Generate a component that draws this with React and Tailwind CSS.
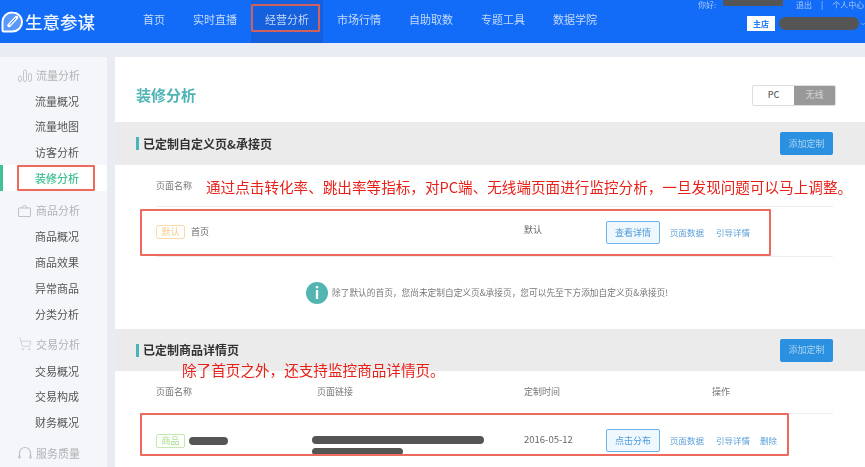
import React from "react";
import { ShoppingCart, ChevronDown } from "lucide-react";

const BarsIcon = () => (
  <svg width="14" height="13" viewBox="0 0 14 13" fill="none" stroke="#c4c6c9" strokeWidth="1">
    <rect x="0.5" y="7" width="3" height="5.5" rx="1.5" />
    <rect x="5.5" y="1" width="3" height="11.5" rx="1.5" />
    <rect x="10.5" y="4.5" width="3" height="8" rx="1.5" />
  </svg>
);

const BagIcon = () => (
  <svg width="13" height="13" viewBox="0 0 13 13" fill="none" stroke="#bfc1c4" strokeWidth="1">
    <rect x="0.500" y="4" width="12" height="8.500" rx="0.500" />
    <path d="M4 4 C4 0.800 9 0.800 9 4" />
  </svg>
);

const HeadsetIcon = () => (
  <svg width="14" height="14" viewBox="0 0 14 14" fill="none" stroke="#bfc1c4" strokeWidth="1.200">
    <path d="M1.500 12 V7 a5.500 5.500 0 0 1 11 0 V12" />
    <path d="M1.500 9.500 V12.500 M12.500 9.500 V12.500" strokeWidth="2" />
  </svg>
);

const groups = [
  { title: "流量分析", icon: <BarsIcon />, items: ["流量概况", "流量地图", "访客分析", "装修分析"], head: "h-[26px]", gap: "" },
  { title: "商品分析", icon: <BagIcon />, items: ["商品概况", "商品效果", "异常商品", "分类分析"], head: "h-[27px]", gap: "mt-[5.500px]" },
  { title: "交易分析", icon: <ShoppingCart size={14} strokeWidth={1} color="#b9bbbe" />, items: ["交易概况", "交易构成", "财务概况"], head: "h-[27px]", gap: "mt-[4px]" },
  { title: "服务质量", icon: <HeadsetIcon />, items: [], head: "h-[27px]", gap: "mt-[4px]" },
];

const navs = ["首页", "实时直播", "经营分析", "市场行情", "自助取数", "专题工具", "数据学院"];

const note1 = "通过点击转化率、跳出率等指标\uFF0C对PC端、无线端页面进行监控分析\uFF0C一旦发现问题可以马上调整。";
const note2 = "除了首页之外\uFF0C还支持监控商品详情页。";
const tip = "除了默认的首页\uFF0C您尚未定制自定义页&承接页\uFF0C您可以先至下方添加自定义页&承接页!";

function Logo() {
  return (
    <svg width="22" height="22" viewBox="0 0 22 22" fill="none">
      <path d="M11.500 1.500a9.500 9.500 0 1 1 0 19H3A1.500 1.500 0 0 1 1.500 19V11.500a9.500 9.500 0 0 1 10-10z" stroke="#fff" strokeWidth="2" fill="#5a98fa" />
      <path d="M15.500 6.500 L8 14.500" stroke="#fff" strokeWidth="3.500" strokeLinecap="round" />
      <path d="M14.500 7.500 L9 13.500" stroke="#126cf8" strokeWidth="1" strokeLinecap="round" />
    </svg>
  );
}

function Redact({ className }) {
  return <div className={"rounded-full bg-[#555555] " + className} />;
}

function Header() {
  return (
    <header className="relative flex h-[43px] items-stretch bg-[#126cf8]">
      <div className="flex w-[129px] items-center pl-px blur-[0.4px]">
        <Logo />
        <span className="ml-[2px] text-[17.500px] font-medium leading-none text-[#eef4ff]">生意参谋</span>
      </div>
      {navs.map((n, i) => (
        <div
          key={n}
          className={
            "relative flex items-center whitespace-nowrap px-[14px] pb-[5px] text-[11px] text-[#c5dafc] " +
            (i === 2 ? "bg-[#1560dc]" : "")
          }
        >
          <span className="blur-[0.4px]">{n}</span>
          {i === 2 && (
            <div className="absolute left-0 top-[4px] h-[28px] w-[69px] rounded-[1px] border-2 border-[#d0605c]" />
          )}
        </div>
      ))}
      <div className="absolute left-[698px] top-0 flex items-start whitespace-nowrap pt-px text-[8px] leading-[8px] text-[#a9c8fb] blur-[0.4px]">
        <span className="w-[25px]">你好:</span>
        <div className="-mt-px h-[6px] w-[60px] rounded-b-[2px] bg-[#555555]" />
        <span className="ml-[13px]">退出</span>
        <span className="ml-[9px]">|</span>
        <span className="ml-[9px]">个人中心</span>
      </div>
      <div className="absolute left-[747px] top-[16px] flex items-center blur-[0.4px]">
        <div className="flex h-[15px] w-[28px] items-center justify-center bg-white text-[8px] font-bold text-[#2a7ef5]">主店</div>
        <Redact className="ml-[4px] h-[13px] w-[80px]" />
        <ChevronDown size={6} color="#cfe0fb" className="ml-[1px]" />
      </div>
    </header>
  );
}

function Sidebar() {
  return (
    <aside className="w-[107px] shrink-0 bg-[#f4f6f9] pt-[5px]">
      {groups.map((g) => (
        <div key={g.title} className={g.gap}>
          <div className={"flex items-center pl-[18px] text-[11px] text-[#b0b2b5] " + g.head}>
            <span className="flex w-[18px] items-center blur-[0.4px]">{g.icon}</span>
            <span className="blur-[0.4px]">{g.title}</span>
          </div>
          {g.items.map((it) => {
            const active = it === "装修分析";
            return (
              <div
                key={it}
                className={
                  "relative flex h-[25.800px] items-center pl-[35px] text-[11px] " +
                  (active ? "bg-white font-medium text-[#3fc095]" : "text-[#555555]")
                }
              >
                {active && (
                  <>
                    <div className="absolute bottom-0 left-0 top-0 w-[3px] bg-[#3fc095]" />
                    <div className="absolute bottom-0 left-[17px] top-0 w-[78px] rounded-[1px] border-2 border-[#ee6a5f]" />
                  </>
                )}
                <span className="blur-[0.4px]">{it}</span>
              </div>
            );
          })}
        </div>
      ))}
    </aside>
  );
}

function SectionHead({ title, h }) {
  return (
    <div className={"flex items-center justify-between bg-[#ebebeb] pl-[21px] pr-[32px] " + h}>
      <div className="flex items-center">
        <div className="h-[13px] w-[3px] bg-[#4ab4bd]" />
        <span className="ml-[4px] text-[12px] font-bold text-[#333333]">{title}</span>
      </div>
      <button className="h-[23px] w-[53px] rounded-[2px] bg-[#2b90e0] text-[9px] text-[#a9d3f3]">添加定制</button>
    </div>
  );
}

function Tag({ color, text, children }) {
  return (
    <span className={"flex h-[14px] w-[29px] items-center justify-center rounded-[2px] border text-[9px] leading-none " + color + " " + text}>
      {children}
    </span>
  );
}

function Ops({ label, del }) {
  return (
    <div className="flex items-center whitespace-nowrap text-[8.500px] text-[#5a9fd8]">
      <button className="h-[23px] w-[54px] rounded-[2px] border border-[#6cb2ec] bg-[#f0f8ff] text-[9px] text-[#4f9bd9]">{label}</button>
      <span className="ml-[10px] w-[46px]">页面数据</span>
      <span className={del ? "w-[44px]" : ""}>引导详情</span>
      {del && <span>删除</span>}
    </div>
  );
}

const gridCols = "grid grid-cols-[161px_207px_82px_1fr] items-center";

export default function App() {
  return (
    <div
      className="h-[467px] w-[865px] overflow-hidden bg-[#e9ecf2]"
      style={{ fontFamily: '"Noto Sans CJK SC", "Noto Sans", sans-serif' }}
    >
      <Header />
      <div className="mt-[14px] flex h-[410px] overflow-hidden">
        <Sidebar />
        <main className="relative ml-[8px] flex-1 overflow-hidden bg-white">
          <div className="blur-[0.4px]">
            <div className="flex h-[65px] items-center justify-between pl-[21px] pr-[29px] pt-[11px]">
              <h1 className="text-[15px] font-bold text-[#4fb4b6]">装修分析</h1>
              <div className="flex h-[21px] w-[84px] overflow-hidden rounded-[2px] border border-[#dddddd] text-[9px] font-medium">
                <div className="flex w-[41px] items-center justify-center bg-white text-[#666666]">PC</div>
                <div className="flex flex-1 items-center justify-center bg-[#999999] text-[#cccccc]">无线</div>
              </div>
            </div>

            <SectionHead title="已定制自定义页&承接页" h="h-[43px]" />
            <div className="ml-[41px] mr-[32px]">
              <div className={gridCols + " h-[42px] border-b border-[#eeeeee] text-[9px] text-[#777777]"}>
                <span>页面名称</span>
              </div>
              <div className={gridCols + " h-[50px] border-b border-[#eeeeee] text-[9px] text-[#666666]"}>
                <div className="col-span-2 flex items-center">
                  <Tag color="border-[#fbd9a8]" text="text-[#f8c98a]">默认</Tag>
                  <span className="ml-[6px]">首页</span>
                </div>
                <span className="-mt-[4px]">默认</span>
                <div className="mt-[2px]">
                  <Ops label="查看详情" />
                </div>
              </div>
            </div>
            <div className="flex h-[72px] items-center whitespace-nowrap pl-[191px] text-[8.700px] text-[#777777]">
              <div className="flex h-[22px] w-[22px] items-center justify-center rounded-full bg-[#52b5b2] text-[15px] font-bold text-white">i</div>
              <span className="ml-[4px]">{tip}</span>
            </div>

            <SectionHead title="已定制商品详情页" h="h-[42px]" />
            <div className="ml-[41px] mr-[32px]">
              <div className={gridCols + " h-[43px] border-b border-[#eeeeee] text-[9px] text-[#777777]"}>
                <span>页面名称</span>
                <span>页面链接</span>
                <span>定制时间</span>
                <span className="pl-[106px]">操作</span>
              </div>
              <div className={gridCols + " h-[53px] text-[9.500px] text-[#666666]"}>
                <div className="flex items-center">
                  <Tag color="border-[#c5e8ae]" text="text-[#a9dc8b]">商品</Tag>
                  <Redact className="ml-[4px] h-[8px] w-[39px]" />
                </div>
                <div className="-ml-[5px] mt-[9px] flex flex-col gap-[4px]">
                  <Redact className="h-[8px] w-[172px]" />
                  <Redact className="h-[7px] w-[91px]" />
                </div>
                <span className="-mt-[3px]">2016-05-12</span>
                <Ops label="点击分布" del />
              </div>
            </div>
          </div>

          {/* annotations layered over the screenshot */}
          <div className="absolute left-[25px] top-[152px] h-[47px] w-[631px] rounded-[1px] border-2 border-[#ee6a5f]" />
          <div className="absolute left-[25px] top-[356px] h-[43px] w-[649px] rounded-[1px] border-2 border-[#ee6a5f]" />
          <p className="absolute left-[91px] top-[119px] whitespace-nowrap text-[14.600px] leading-[22px] text-[#e8201a]">
            {note1}
          </p>
          <p className="absolute left-[67px] top-[302px] whitespace-nowrap text-[14.600px] leading-[22px] text-[#e8201a]">
            {note2}
          </p>
        </main>
      </div>
    </div>
  );
}
